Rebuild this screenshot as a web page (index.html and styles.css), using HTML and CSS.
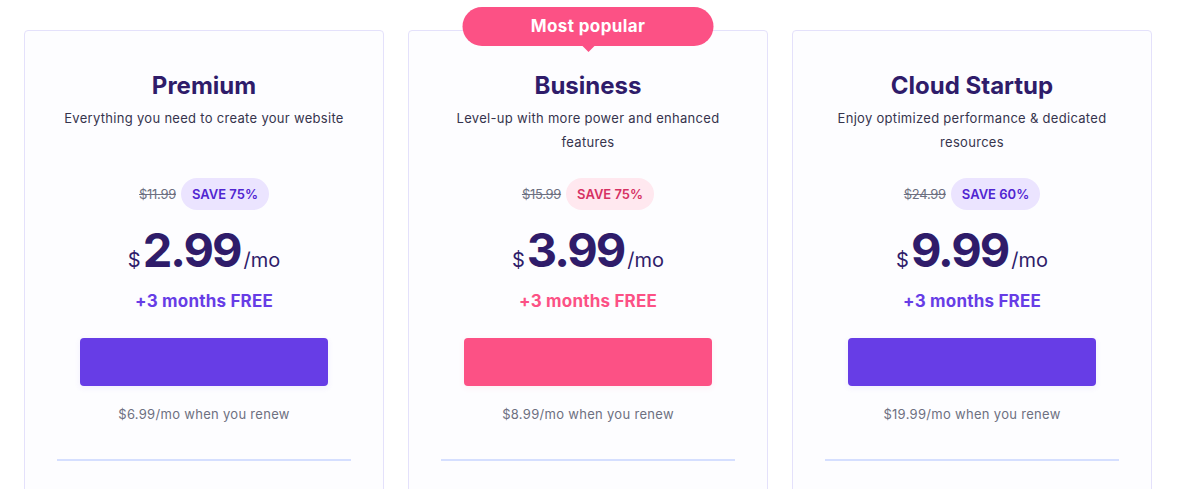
FILE: index.html
```html
<!DOCTYPE html>
<html lang="en">
<head>
<meta charset="utf-8">
<title>Plans</title>
<link rel="stylesheet" href="styles.css">
</head>
<body>
<div class="plans">
  <div class="card">
    <h2 class="title">Premium</h2>
    <p class="desc">Everything you need to create your website</p>
    <div class="discount">
      <span class="old">$11.99</span>
      <span class="save">SAVE 75%</span>
    </div>
    <div class="price"><span class="cur">$</span><span class="amount">2.99</span><span class="per">/mo</span></div>
    <div class="free">+3 months FREE</div>
    <div class="btn"></div>
    <div class="renew">$6.99/mo when you renew</div>
    <div class="divider"></div>
  </div>
  <div class="card card-popular">
    <div class="badge">Most popular</div>
    <h2 class="title">Business</h2>
    <p class="desc">Level-up with more power and enhanced features</p>
    <div class="discount">
      <span class="old">$15.99</span>
      <span class="save save-pink">SAVE 75%</span>
    </div>
    <div class="price"><span class="cur">$</span><span class="amount">3.99</span><span class="per">/mo</span></div>
    <div class="free free-pink">+3 months FREE</div>
    <div class="btn btn-pink"></div>
    <div class="renew">$8.99/mo when you renew</div>
    <div class="divider"></div>
  </div>
  <div class="card">
    <h2 class="title">Cloud Startup</h2>
    <p class="desc">Enjoy optimized performance &amp; dedicated resources</p>
    <div class="discount">
      <span class="old">$24.99</span>
      <span class="save">SAVE 60%</span>
    </div>
    <div class="price"><span class="cur">$</span><span class="amount">9.99</span><span class="per">/mo</span></div>
    <div class="free">+3 months FREE</div>
    <div class="btn"></div>
    <div class="renew">$19.99/mo when you renew</div>
    <div class="divider"></div>
  </div>
</div>
</body>
</html>
```
FILE: styles.css
```css
* { box-sizing: border-box; }
html, body { margin: 0; padding: 0; background: #ffffff; }
body {
  font-family: Inter, "Noto Sans", "DejaVu Sans", sans-serif;
  color: #2f1c6a;
  overflow: hidden;
  height: 489px;
}
.plans {
  display: flex;
  gap: 24px;
  padding: 30px 0 0 24px;
}
.card {
  position: relative;
  width: 360px;
  height: 520px;
  border: 1px solid #e4e1fb;
  border-radius: 4px;
  background: #fdfdff;
  display: flex;
  flex-direction: column;
  align-items: center;
  padding: 39px 32px 0;
}
.badge {
  position: absolute;
  top: -24px;
  left: 50%;
  transform: translateX(-50%);
  width: 251px;
  height: 39px;
  border-radius: 20px;
  background: #fc5185;
  color: #fff;
  font-weight: 700;
  font-size: 17px;
  letter-spacing: 0.4px;
  line-height: 39px;
  text-align: center;
}
.badge::after {
  content: "";
  position: absolute;
  left: 50%;
  bottom: -6px;
  margin-left: -6px;
  border-left: 6px solid transparent;
  border-right: 6px solid transparent;
  border-top: 6px solid #fc5185;
}
.title {
  margin: 0;
  font-size: 24px;
  line-height: 32px;
  font-weight: 700;
  color: #2f1c6a;
  letter-spacing: 0;
}
.desc {
  margin: 4px 0 0;
  height: 48px;
  width: 290px;
  font-size: 13px;
  letter-spacing: 0.3px;
  line-height: 24px;
  color: #36344d;
  text-align: center;
}
.discount {
  margin-top: 24px;
  display: flex;
  align-items: center;
  gap: 5px;
  height: 32px;
}
.old {
  font-size: 13px;
  color: #6d7081;
  text-decoration: line-through;
  letter-spacing: -0.3px;
}
.save {
  display: inline-block;
  height: 32px;
  line-height: 32px;
  padding: 0 11px;
  border-radius: 16px;
  background: #ebe4ff;
  color: #5025d1;
  font-size: 13px;
  font-weight: 600;
}
.save-pink { background: #ffe8ef; color: #d63163; }
.price {
  margin-top: 12px;
  display: flex;
  align-items: baseline;
  height: 56px;
  line-height: 56px;
  color: #2f1c6a;
}
.cur { font-size: 20px; color: #2f1c6a; margin-right: 2px; }
.amount { font-size: 47px; font-weight: 700; letter-spacing: -2px; }
.per { font-size: 20px; margin-left: 3px; }
.free {
  margin-top: 11px;
  font-size: 17px;
  line-height: 24px;
  font-weight: 700;
  letter-spacing: 0.2px;
  color: #673de6;
}
.free-pink { color: #fc5185; }
.btn {
  margin-top: 25px;
  width: 248px;
  height: 48px;
  border-radius: 4px;
  background: #673de6;
  box-shadow: 0 2px 6px rgba(103, 61, 230, 0.08);
}
.btn-pink { background: #fc5185; box-shadow: 0 2px 6px rgba(252, 81, 133, 0.08); }
.renew {
  margin-top: 18px;
  font-size: 13px;
  letter-spacing: 0.3px;
  line-height: 20px;
  color: #6d7081;
}
.divider {
  margin-top: 35px;
  width: 100%;
  height: 2px;
  background: #d5dfff;
}
```
